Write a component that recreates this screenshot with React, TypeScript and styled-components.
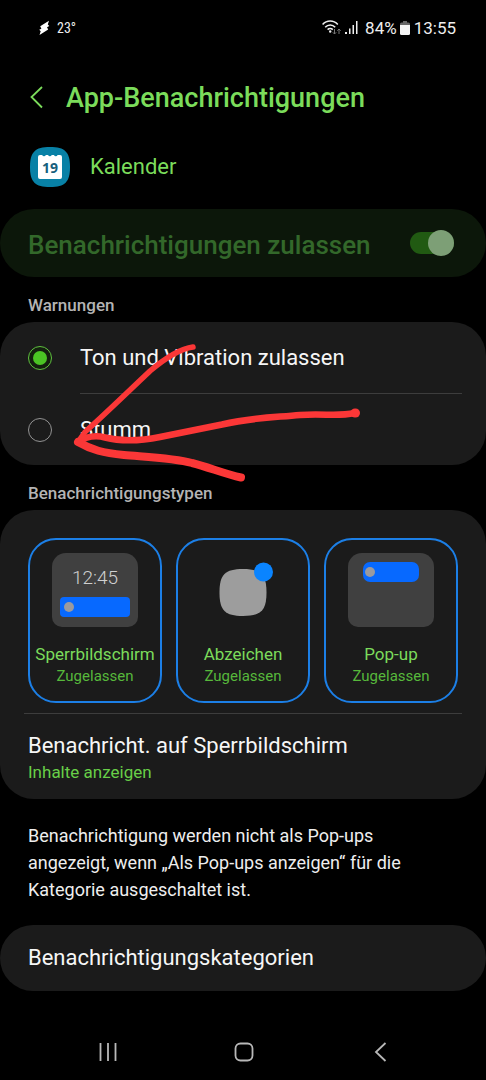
import React, { useState } from "react";
import styled, { createGlobalStyle } from "styled-components";

const GlobalStyle = createGlobalStyle`
  *, *::before, *::after { box-sizing: border-box; }
  html { background: #000; }
  body {
    margin: 0;
    background: #000;
    color: #f6f6f6;
    font-family: Roboto, "Liberation Sans", sans-serif;
  }
  button { font: inherit; color: inherit; background: none; border: 0; padding: 0; cursor: pointer; }
  svg { display: block; flex: none; }
`;

const Screen = styled.div`
  display: flex;
  flex-direction: column;
  min-height: 100vh;
`;

const StatusBar = styled.div`
  display: flex;
  align-items: center;
  justify-content: space-between;
  height: 56px;
  padding: 0 30px 0 38px;
`;

const StatusGroup = styled.div`
  display: flex;
  align-items: center;
`;

const StatusText = styled.span`
  font-size: 17px;
  line-height: 24px;
  color: #eee;
`;

const Temperature = styled(StatusText)`
  margin-left: 7px;
  font-family: "Roboto Condensed", Roboto, sans-serif;
  font-size: 14px;
`;

const Percent = styled(StatusText)`
  margin: 0 3px 0 5px;
`;

const Clock = styled(StatusText)`
  margin-left: 4px;
`;

const Header = styled.header`
  display: flex;
  align-items: center;
  height: 84px;
  padding: 0 28px;
`;

const BackButton = styled.button`
  display: flex;
  width: 38px;
  height: 40px;
  align-items: center;
`;

const Title = styled.h1`
  margin: 0;
  font-size: 27px;
  line-height: 36px;
  font-weight: 500;
  color: #7bdc5b;
`;

const AppRow = styled.div`
  display: flex;
  align-items: center;
  gap: 20px;
  height: 54px;
  margin-bottom: 15px;
  padding: 0 30px;
`;

const AppName = styled.span`
  font-size: 22px;
  line-height: 32px;
  color: #7bdc5b;
`;

const Panel = styled.section`
  position: relative;
  background: #1b1b1b;
  border-radius: 34px;
`;

const MasterToggle = styled.label`
  display: flex;
  align-items: center;
  justify-content: space-between;
  min-height: 68px;
  padding: 0 32px 0 28px;
  border-radius: 34px;
  background: #0c170a;
  color: #33682a;
  font-size: 26px;
  line-height: 36px;
  font-weight: 500;
`;

const MasterText = styled.span`
  padding-top: 3px;
`;

const Switch = styled.input`
  appearance: none;
  display: flex;
  align-items: center;
  justify-content: flex-end;
  width: 44px;
  height: 22px;
  margin: 0;
  border-radius: 11px;
  background: #215a12;
  &::before {
    content: "";
    width: 26px;
    height: 26px;
    flex: none;
    border-radius: 50%;
    background: #7d9f76;
  }
  &:not(:checked) { justify-content: flex-start; }
`;

const SectionLabel = styled.h2`
  margin: 0;
  padding: 12px 28px 0;
  font-size: 17px;
  line-height: 33px;
  font-weight: 500;
  color: #b4b4b4;
`;

const RadioRow = styled.label`
  display: flex;
  align-items: center;
  gap: 28px;
  height: 71px;
  padding: 0 28px;
  font-size: 22px;
  line-height: 32px;
`;

const Radio = styled.input`
  appearance: none;
  display: grid;
  place-items: center;
  width: 24px;
  height: 24px;
  margin: 0;
  border: 1px solid #929292;
  border-radius: 50%;
  &:checked { border-color: #5fc13f; background: #14200f; }
  &:checked::before {
    content: "";
    width: 14px;
    height: 14px;
    border-radius: 50%;
    background: #4bc524;
  }
`;

const Divider = styled.hr<{ $inset: number }>`
  height: 1px;
  margin: 0 24px 0 ${(p) => p.$inset}px;
  border: 0;
  background: #3d3d3d;
`;

const Scribble = styled.svg`
  position: absolute;
  left: 0;
  top: 0;
  z-index: 1;
  pointer-events: none;
`;

const TypeGrid = styled.div`
  display: grid;
  grid-template-columns: repeat(3, minmax(0, 1fr));
  gap: 14px;
  padding: 28px 28px 10px;
`;

const TypeCard = styled.button`
  display: flex;
  flex-direction: column;
  align-items: center;
  height: 165px;
  padding-top: 13px;
  border: 2px solid #1c7fe6;
  border-radius: 28px;
  white-space: nowrap;
`;

const Preview = styled.span<{ $plain?: boolean }>`
  display: flex;
  flex-direction: column;
  align-items: center;
  width: 86px;
  height: 74px;
  margin-bottom: 15px;
  border-radius: 14px 14px 10px 10px;
  background: ${(p) => (p.$plain ? "transparent" : "#404040")};
`;

const PreviewClock = styled.span`
  margin: 12px 0 7px;
  font-size: 19px;
  line-height: 25px;
  font-weight: 300;
  color: #d0d0d0;
`;

const Banner = styled.span<{ $popup?: boolean }>`
  display: flex;
  align-items: center;
  width: ${(p) => (p.$popup ? 56 : 70)}px;
  height: 20px;
  margin-top: ${(p) => (p.$popup ? 9 : 0)}px;
  padding-left: ${(p) => (p.$popup ? 2 : 4)}px;
  border-radius: ${(p) => (p.$popup ? 7 : 4)}px;
  background: #0769ff;
  &::before {
    content: "";
    width: 10px;
    height: 10px;
    border-radius: 50%;
    background: #9a9a9f;
  }
`;

const TypeName = styled.span`
  font-size: 17px;
  line-height: 24px;
  color: #7bdc5b;
`;

const TypeState = styled.span`
  font-size: 15px;
  line-height: 20px;
  color: #57b83b;
`;

const LinkRow = styled.button`
  display: flex;
  flex-direction: column;
  justify-content: center;
  width: 100%;
  min-height: 66px;
  padding: 0 28px;
  text-align: left;
  font-size: 22px;
  line-height: 32px;
`;

const LockRow = styled(LinkRow)`
  min-height: 85px;
`;

const RowValue = styled.span`
  font-size: 17px;
  line-height: 21px;
  color: #68cf48;
`;

const Hint = styled.p`
  margin: 0;
  padding: 23px 28px 22px;
  font-size: 18px;
  line-height: 27px;
  color: #eee;
`;

const NavBar = styled.nav`
  display: flex;
  align-items: center;
  justify-content: space-around;
  height: 57px;
  margin-top: auto;
  padding: 0 38px 0 40px;
`;

const NavButton = styled.button`
  display: grid;
  place-items: center;
  width: 48px;
  height: 48px;
`;

const BoltIcon = () => (
  <svg width="12" height="16" viewBox="0 0 12 16" aria-hidden="true">
    <path d="M11 .8 2.200 6.300l1.200 2.400-2.200 1 1.500 1.500L1.500 15l8.700-5.600-1.200-2.200 2.300-1.200-1.500-1.500z" fill="#fff" />
  </svg>
);

const WifiIcon = () => (
  <svg width="20" height="16" viewBox="0 0 20 16" fill="none" aria-hidden="true">
    <g stroke="#eee" strokeWidth="1.6">
      <path d="M.6 4.500C4.800-.1 11.600-.1 15.800 4.500" />
      <path d="M3.200 7.200c2.800-3 7.200-3 10 0" />
      <path d="M5.600 9.600c1.500-1.500 3.700-1.500 5.200 0" />
    </g>
    <circle cx="8.200" cy="11.500" r="1.200" fill="#eee" />
    <path d="M12.500 9v5m-1.700-1.700 1.700 1.700 1.700-1.700M17 14V9m-1.700 1.700L17 9l1.700 1.700" stroke="#777" strokeWidth="1" />
  </svg>
);

const SignalIcon = () => (
  <svg width="18" height="16" viewBox="0 0 18 16" aria-hidden="true">
    <path d="M3 12h2v2H3zM7 8.500h1.500V14H7zM10.500 5H12v9h-1.500zM14 1h1.500v13H14z" fill="#eee" />
  </svg>
);

const BatteryIcon = () => (
  <svg width="10" height="16" viewBox="0 0 10 16" aria-hidden="true">
    <path d="M3 1h4v1.500h1.500a1.500 1.500 0 0 1 1.500 1.500v3H0V4a1.500 1.500 0 0 1 1.500-1.500H3z" fill="#666" />
    <path d="M0 5h10v8.500a1.500 1.500 0 0 1-1.500 1.500h-7A1.500 1.500 0 0 1 0 13.500z" fill="#f4f4f4" />
  </svg>
);

const CalendarIcon = () => (
  <svg width="40" height="40" viewBox="0 0 40 40" aria-hidden="true">
    <path d="M20 0c15 0 20 5 20 20s-5 20-20 20S0 35 0 20 5 0 20 0z" fill="#0881a6" />
    <path
      d="M10 8h2.200a1.900 1.900 0 0 0 3.600 0h2.300a1.900 1.900 0 0 0 3.600 0h2.300a1.900 1.900 0 0 0 3.600 0H30a2 2 0 0 1 2 2v20a2 2 0 0 1-2 2H10a2 2 0 0 1-2-2V10a2 2 0 0 1 2-2z"
      fill="#fff"
    />
    <text x="20" y="25.500" textAnchor="middle" fontFamily="Open Sans, sans-serif" fontSize="14" fontWeight="700" fill="#17607d">
      19
    </text>
  </svg>
);

const BadgePreview = () => (
  <svg width="86" height="74" viewBox="0 0 86 74" aria-hidden="true">
    <path d="M43 16c18 0 23.500 5.500 23.500 23.500S61 63 43 63s-23.500-5.500-23.500-23.500S25 16 43 16z" fill="#9d9d9d" />
    <circle cx="63.500" cy="19" r="9.500" fill="#0a84ff" />
  </svg>
);

const RedArrow = () => (
  <Scribble width="380" height="170" viewBox="0 322 380 170" fill="none" aria-hidden="true">
    <g stroke="#fb3737" strokeLinecap="round" strokeLinejoin="round">
      <path d="M193 347C178 349 163 360 150 371C128 392 100 419 85 432L78 442" strokeWidth="5.500" />
      <path
        d="M78 442C87 436 95 435 105 437.500C123 442 140 441 160 437L222 424.500C255 417 275 417.500 300 415C325 413 335 417 355 413"
        strokeWidth="6.500"
      />
      <path d="M78 442C92 450 103 453 124 455C147 457 174 458 192 463C208 467 225 474 241 477.500" strokeWidth="8" />
      <path d="M355 413h.5" strokeWidth="9" />
    </g>
  </Scribble>
);

export default function App() {
  const [alert, setAlert] = useState("sound");
  const [allowed, setAllowed] = useState(true);

  return (
    <>
      <GlobalStyle />
      <Screen>
        <StatusBar>
          <StatusGroup>
            <BoltIcon />
            <Temperature>23°</Temperature>
          </StatusGroup>
          <StatusGroup>
            <WifiIcon />
            <SignalIcon />
            <Percent>84%</Percent>
            <BatteryIcon />
            <Clock>13:55</Clock>
          </StatusGroup>
        </StatusBar>

        <Header>
          <BackButton type="button" aria-label="Zurück">
            <svg width="16" height="24" viewBox="0 0 16 24" fill="none" stroke="#7bdc5b" strokeWidth="1.800">
              <path d="M14 1 3.500 11 14 21.500" />
            </svg>
          </BackButton>
          <Title>App-Benachrichtigungen</Title>
        </Header>

        <main>
          <AppRow>
            <CalendarIcon />
            <AppName>Kalender</AppName>
          </AppRow>

          <MasterToggle>
            <MasterText>Benachrichtigungen zulassen</MasterText>
            <Switch type="checkbox" role="switch" checked={allowed} onChange={(e) => setAllowed(e.target.checked)} />
          </MasterToggle>

          <SectionLabel>Warnungen</SectionLabel>
          <Panel>
            <RadioRow>
              <Radio type="radio" name="alert" checked={alert === "sound"} onChange={() => setAlert("sound")} />
              Ton und Vibration zulassen
            </RadioRow>
            <Divider $inset={80} />
            <RadioRow>
              <Radio type="radio" name="alert" checked={alert === "silent"} onChange={() => setAlert("silent")} />
              Stumm
            </RadioRow>
            <RedArrow />
          </Panel>

          <SectionLabel>Benachrichtigungstypen</SectionLabel>
          <Panel>
            <TypeGrid>
              <TypeCard type="button" aria-pressed="true">
                <Preview>
                  <PreviewClock>12:45</PreviewClock>
                  <Banner />
                </Preview>
                <TypeName>Sperrbildschirm</TypeName>
                <TypeState>Zugelassen</TypeState>
              </TypeCard>
              <TypeCard type="button" aria-pressed="true">
                <Preview $plain>
                  <BadgePreview />
                </Preview>
                <TypeName>Abzeichen</TypeName>
                <TypeState>Zugelassen</TypeState>
              </TypeCard>
              <TypeCard type="button" aria-pressed="true">
                <Preview>
                  <Banner $popup />
                </Preview>
                <TypeName>Pop-up</TypeName>
                <TypeState>Zugelassen</TypeState>
              </TypeCard>
            </TypeGrid>
            <Divider $inset={24} />
            <LockRow type="button">
              Benachricht. auf Sperrbildschirm
              <RowValue>Inhalte anzeigen</RowValue>
            </LockRow>
          </Panel>

          <Hint>
            Benachrichtigung werden nicht als Pop-ups angezeigt, wenn „Als Pop-ups anzeigen“ für die Kategorie
            ausgeschaltet ist.
          </Hint>

          <Panel>
            <LinkRow type="button">Benachrichtigungskategorien</LinkRow>
          </Panel>
        </main>

        <NavBar>
          <NavButton type="button" aria-label="Letzte Apps">
            <svg width="20" height="20" viewBox="0 0 20 20" stroke="#b8b8b8" strokeWidth="1.800">
              <path d="M2.500 1v18M10 1v18M17.500 1v18" />
            </svg>
          </NavButton>
          <NavButton type="button" aria-label="Startbildschirm">
            <svg width="20" height="20" viewBox="0 0 20 20" fill="none" stroke="#b8b8b8" strokeWidth="1.800">
              <rect x="1.500" y="1.500" width="17" height="17" rx="5" />
            </svg>
          </NavButton>
          <NavButton type="button" aria-label="Zurück">
            <svg width="20" height="20" viewBox="0 0 20 20" fill="none" stroke="#b8b8b8" strokeWidth="1.800">
              <path d="M15.500 1 6 10l9.500 9" />
            </svg>
          </NavButton>
        </NavBar>
      </Screen>
    </>
  );
}
